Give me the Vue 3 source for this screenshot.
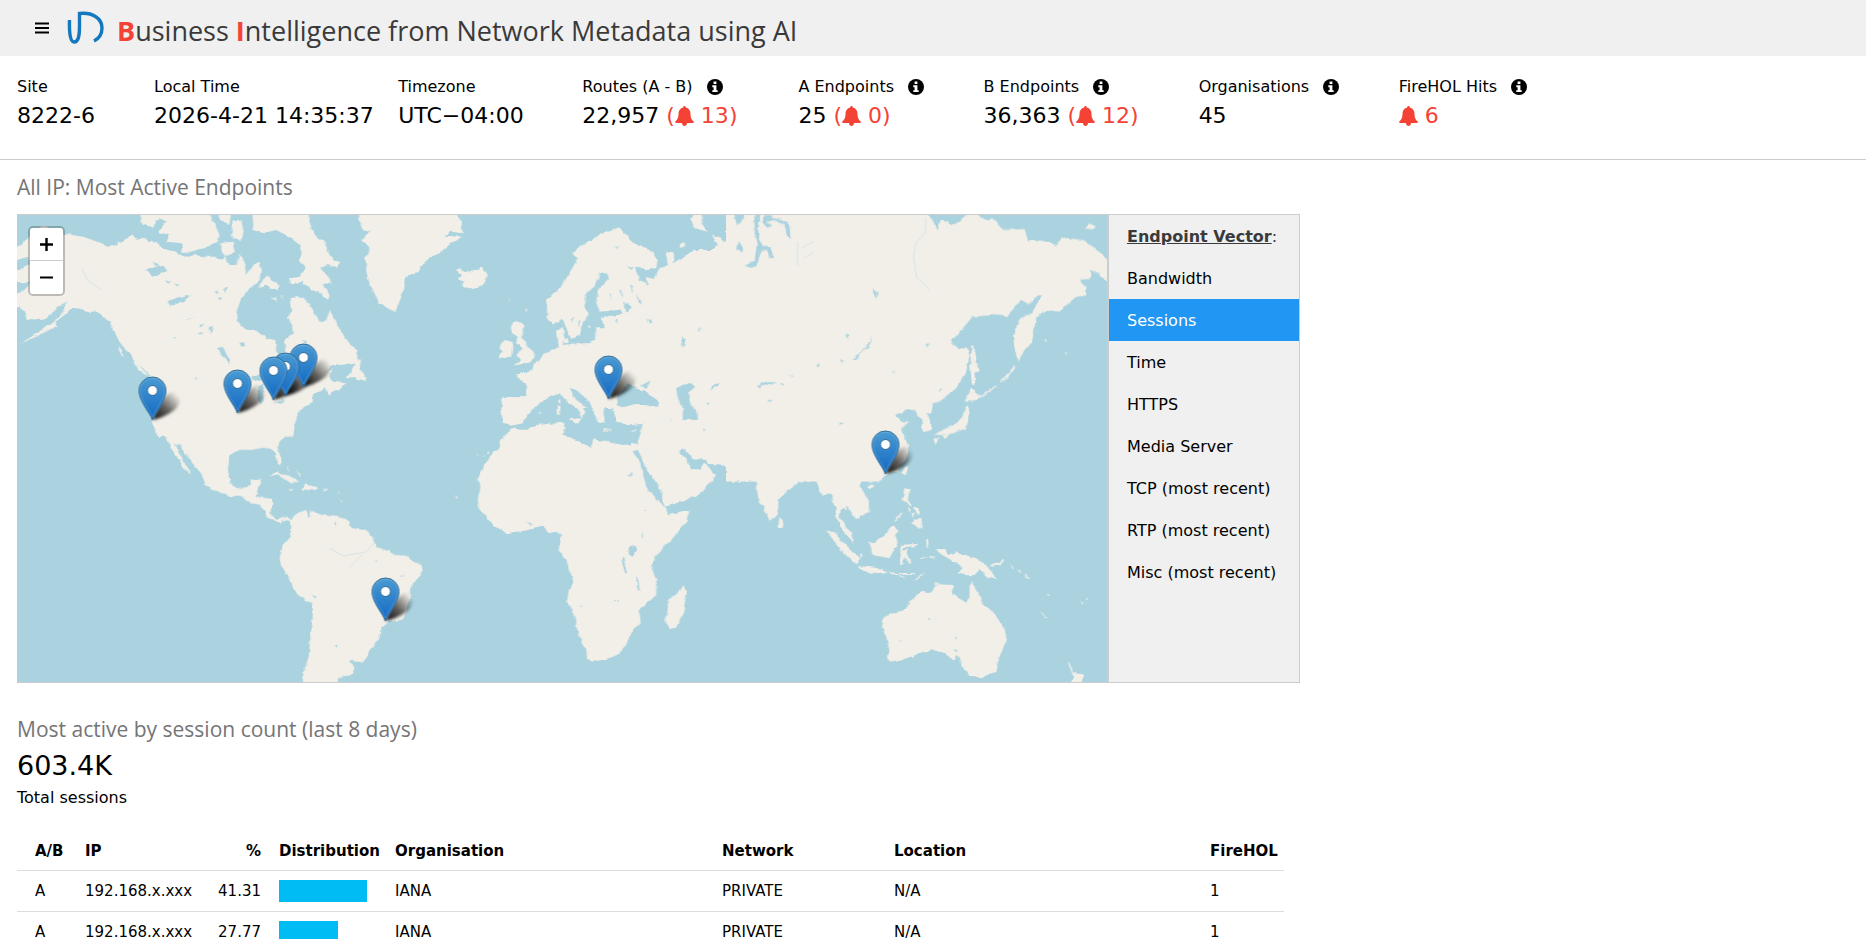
<script setup>
import { ref } from 'vue'

const stats = [
  { label: 'Site', value: '8222-6' },
  { label: 'Local Time', value: '2026-4-21 14:35:37' },
  { label: 'Timezone', value: 'UTC−04:00' },
  { label: 'Routes (A - B)', value: '22,957', info: true, alert: '13', wrap: true },
  { label: 'A Endpoints', value: '25', info: true, alert: '0', wrap: true },
  { label: 'B Endpoints', value: '36,363', info: true, alert: '12', wrap: true },
  { label: 'Organisations', value: '45', info: true },
  { label: 'FireHOL Hits', value: '', info: true, alert: '6' },
]

const vectors = ['Bandwidth', 'Sessions', 'Time', 'HTTPS', 'Media Server', 'TCP (most recent)', 'RTP (most recent)', 'Misc (most recent)']
const active = ref('Sessions')

const rows = [
  { side: 'A', ip: '192.168.x.xxx', pct: 41.31, org: 'IANA', network: 'PRIVATE', location: 'N/A', hits: 1 },
  { side: 'A', ip: '192.168.x.xxx', pct: 27.77, org: 'IANA', network: 'PRIVATE', location: 'N/A', hits: 1 },
]

// Marker tips in map units, northernmost first so that southern pins overlap them
const pins = [[304, 387], [286, 396], [609, 399], [274, 400], [238, 413], [153, 420], [886, 474], [386, 621]]
</script>

<template>
  <div class="page">
    <header class="topbar">
      <button class="menu" type="button" aria-label="Menu">
        <svg width="14" height="12" viewBox="0 0 14 12"><path d="M0 1.500h14M0 6h14M0 10.500h14" stroke="#000" stroke-width="2.200" /></svg>
      </button>
      <svg class="logo" width="38" height="34" viewBox="0 0 38 34" fill="none" stroke="#1478be" stroke-width="3.400">
        <path d="M2.500 9C2.200 18 2.500 31 7 31C12 31 12.500 23 12.500 15V2.500C25 1 35 7 35 17C35 23 32 27.500 27 30" />
      </svg>
      <h1><b>B</b>usiness <b>I</b>ntelligence from Network Metadata using AI</h1>
    </header>

    <section class="stats">
      <div v-for="s in stats" :key="s.label" class="stat">
        <div class="label">
          {{ s.label }}
          <svg v-if="s.info" class="info" width="16" height="16" viewBox="0 0 16 16">
            <circle cx="8" cy="8" r="8" />
            <path fill="#fff" d="M6.600 2.600h2.800v2.300H6.600zM5.300 6.300h4.100v4.900h1.300v1.900H5.300v-1.900h1.300V8.200H5.300z" />
          </svg>
        </div>
        <div class="value">
          {{ s.value }}
          <span v-if="s.alert" class="alert"><template v-if="s.wrap">(</template><svg width="19" height="20" viewBox="0 0 19 20"><path d="M9.500 0c.8 0 1.300.6 1.300 1.400C13.800 2 15.500 4.500 15.500 7.500c0 4.500 1.200 6.300 3 7.800.6.600.3 1.700-.7 1.700H12c0 1.600-1.100 2.900-2.500 2.900S7 18.600 7 17H1.200c-1 0-1.300-1.100-.7-1.700 1.800-1.500 3-3.300 3-7.800 0-3 1.700-5.500 4.700-6.100C8.200.6 8.700 0 9.500 0z" /></svg> {{ s.alert }}<template v-if="s.wrap">)</template></span>
        </div>
      </div>
    </section>

    <main>
      <h2>All IP: Most Active Endpoints</h2>
      <div class="explorer">
        <div class="map">
          <svg class="world" viewBox="17 215 1091 467" preserveAspectRatio="xMidYMid slice" role="img" aria-label="World map of active endpoints">
            <defs>
              <filter id="coast" x="0" y="0" width="1120" height="700" filterUnits="userSpaceOnUse">
                <feTurbulence type="fractalNoise" baseFrequency="0.16" numOctaves="2" seed="4" />
                <feDisplacementMap in="SourceGraphic" scale="4" xChannelSelector="R" yChannelSelector="G" />
              </filter>
              <filter id="soft" x="-30%" y="-30%" width="160%" height="160%"><feGaussianBlur stdDeviation="1.6" /></filter>
              <linearGradient id="pinFill" x1="0" y1="0" x2="0" y2="1">
                <stop offset="0" stop-color="#4a9bd3" /><stop offset="1" stop-color="#1268c3" />
              </linearGradient>
              <linearGradient id="shade" x1="0" y1="1" x2="1" y2="0">
                <stop offset="0" stop-opacity=".95" /><stop offset=".45" stop-opacity=".6" /><stop offset=".9" stop-opacity="0" />
              </linearGradient>
              <g id="pin">
                <path d="M0 0C-3-8-13.500-19-13.500-29.500a13.500 13.500 0 0 1 27 0C13.500-19 3-8 0 0z" fill="url(#pinFill)" stroke="#2e6c97" stroke-width="1" />
                <path d="M0-3C-3-11-12.300-20-12.300-29.500a12.300 12.300 0 0 1 24.600 0C12.300-20 3-11 0-3z" fill="none" stroke="#fff" stroke-opacity=".16" />
                <circle cy="-29.500" r="5" fill="#fff" stroke="#2e6c97" stroke-width="1" />
              </g>
            </defs>
            <rect x="0" y="200" width="1130" height="500" fill="#aad3df" />
            <g filter="url(#coast)" class="land">
              <g transform="translate(0 165) scale(.33333)">
                <path d="M30 262L51 248 80 225 110 195 135 182 160 200 200 207 250 215 290 228 330 248 360 232 400 208 410 225 435 218 450 232 475 232 490 250 520 260 560 275 590 270 620 275 650 275 665 285 680 275 690 300 710 300 720 265 738 300 735 330 760 300 780 290 785 310 780 345 750 370 725 400 712 440 716 470 735 490 765 495 800 518 828 526 830 560 845 580 858 562 855 530 880 505 878 480 865 460 875 440 870 400 910 395 930 420 945 440 960 470 980 465 992 435 1005 465 1025 500 1050 535 1075 555 1073 590 1040 598 1000 603 970 625 1000 612 990 630 1000 650 1040 655 1020 670 985 690 975 668 940 690 940 710 915 725 900 735 885 770 888 790 880 815H475L465 790 455 765 445 720 445 680 450 630 430 610 405 595 400 570 375 550 360 530 345 500 330 470 310 455 290 440 260 440 230 425 215 435 195 450 165 470 175 485 150 495 110 515 60 538 120 500 160 470 190 440 200 412 180 425 150 450 130 465 85 462 75 435 51 425 30 430z" />
                <path d="M420 140L430 180 460 185 480 160 500 170 475 200 510 210 500 230 550 235 545 260 575 260 620 245 655 230 660 210 645 175 625 140zM650 140L665 165 690 180 695 140zM700 165L725 165 735 210 720 225 695 215zM755 140L760 195 790 205 830 195 870 215 900 240 910 260 900 290 920 310 900 335 870 340 875 355 910 350 935 375 965 385 985 405 990 390 970 360 990 350 1000 365 985 330 960 310 985 300 1010 310 1022 295 990 270 975 230 950 215 935 190 925 140zM800 330L815 345 840 365 830 375 800 360 780 370 790 345zM660 235L700 230 705 260 680 275 665 260zM1066 590L1085 583 1080 610 1100 635 1100 648 1070 640 1042 640 1055 615zM818 400l12-2-2 10zM842 392l12 0-4 10zM355 545l12 12 5 20-10-10zM400 592l20 12 30 30-30-18z" />
                <path class="water" d="M30 292L85 275 92 300 51 318H30zM30 350L90 352 75 378 30 392zM655 550L670 545 690 585 690 600 665 570zM505 408L560 390 575 392 545 412 515 422zM435 312L492 302 500 315 465 335 455 325zM548 468L590 454 570 462zM755 638L790 622 805 640 770 650zM775 665L795 655 787 715 775 710zM810 655L840 660 835 680zM820 716L858 700 850 712zM460 290l15 8-10 8zM525 355l15 6-8 6zM645 380l12-4-3 12zM670 372l12-3-5 16zM655 400l8-3 2 12zM600 475l15 4-10 5zM630 490l14-8-8 24zM595 505l14-4-5 12zM495 350l20-6-10 12zM515 520l12-2-6 6zM585 640l10-4-4 8zM720 535l10-4 4 12-10 2zM905 530l14-6 3 12zM945 430l28 2-8 18z" />
              </g>
              <g transform="translate(370 205) scale(.33333)">
                <path d="M-32 15L-30 45-22 75 0 80-25 105 0 130-12 160-10 200 0 235 30 295 75 322 90 290 105 250 105 215 145 200 175 160 210 145 245 115 278 95 220 92 245 80 280 85 275 45 250 15z" />
                <path d="M260 195L270 188 285 205 300 200 335 188 355 210 345 235 310 255 275 240 285 230 262 222 280 212zM430 350L465 360 455 395 480 430 498 445 490 470 435 482 455 465 440 450 460 430 440 415 445 395 425 385zM405 405L430 410 425 455 388 460 400 440 390 430zM963 40L985 15 1000 30 1000 60 1015 80 975 70zM598 643L634 640 622 656zM562 605L573 602 571 630 562 628zM566 585l6-4 1 16-6 0zM700 672L732 676 702 677zM783 678L803 672 794 682zM932 118l12-6 4 10-12 8zM583 403l12-4 2 14-10 2zM652 365l8-6-3 14zM505 624l10-4-4 8zM470 308l4 8-6 4zM416 280l6 4-4 6z" />
                <path d="M400 575L470 577 473 545 440 508 480 500 500 470 530 440 565 430 560 380 580 365 585 400 580 420 620 415 660 415 680 405 680 370 710 370 690 340 720 333 762 328 750 315 690 320 680 290 685 255 718 220 715 205 690 205 680 240 650 265 645 305 660 330 640 350 635 390 605 402 590 370 580 340 555 357 535 345 530 285 575 245 600 205 625 160 605 145 655 110 700 85 750 70 770 90 800 120 840 135 865 165 860 190 835 195 795 182 812 225 835 240 830 215 852 222 870 190 895 180 888 140 915 145 910 175 935 160 975 135 1030 135 1045 120 1028 88 1060 105 1100 125 1122 140 1105 85 1120 50 1125 10 1200 10 1200 665 818 657 785 660 740 650 730 608 700 610 706 650 690 655 670 615 660 590 620 555 600 548 620 585 655 608 640 610 648 625 635 640 630 615 595 590 570 565 545 575 515 590 480 625 460 655 425 662 400 650 395 610z" />
                <path class="water" d="M740 600L745 570 775 535 800 545 800 555 830 560 870 590 865 605 800 597 760 607zM812 543L845 526 832 548zM920 550L960 530 977 545 955 565 965 600 985 625 985 655 940 655 940 610 925 580zM765 290L788 305 772 320 763 305zM803 265L822 300 808 290zM830 340l16 12-8 4zM735 342l8 0 0 14zM600 345l14-10-6 16zM625 350l8-4-4 18zM738 120l8 4-4 10zM752 255l6 0 0 28zM720 268l5 0-3 18zM785 240l6 4-4 22zM935 395l16 6-12 28zM985 375l10-6-8 12zM1028 540l24-6-28 26zM1120 182l20-2-4 10zM775 180l14 8-8 8z" />
              </g>
              <g transform="translate(740 205) scale(.33333)">
                <path d="M-40 10L555 10 575 40 595 75 605 45 640 60 675 35 700 15 735 45 760 40 790 75 855 72 865 105 930 108 950 125 965 98 1035 105 1090 150 1102 165 1120 200 1120 230 1102 228 1080 208 1055 195 1055 220 1020 225 1040 245 1040 272 1010 275 960 320 920 315 890 335 885 370 880 410 860 430 835 468 825 430 820 390 845 340 880 320 905 272 890 275 865 300 850 287 825 300 805 335 760 330 700 335 635 410 660 430 685 430 690 455 680 500 650 550 610 582 580 600 575 625 560 625 575 650 575 675 550 682 545 640 530 620 510 610 468 632 490 650 510 650 485 670 505 720 505 745 480 790 437 808 420 830H-40z" />
                <path d="M698 420L705 425 717 500 705 505 708 540 697 535 692 480zM692 548L725 575 695 590 678 590zM685 600L692 625 680 670 640 685 600 690 585 688 650 655 670 635 675 610zM582 700L597 700 590 718 585 715zM607 692L632 686 620 698zM1035 70L1050 55 1070 65 1060 73zM496 788L505 785 500 806 492 808zM720 573L770 542 771 546 722 577zM780 535l20-22 24-32 4 3-22 32-24 22zM915 403l8 4-5 4zM980 440l5 6-5 2z" />
                <path class="water" d="M-20 10L14 10 8 50-8 60zM-5 105L12 130 8 142-10 135zM44 10L64 10 58 60 56 100 70 122 92 125 104 160 90 158 82 132 66 135 50 185 10 185 45 168 52 120 46 90zM75 30l28 0-4 10 22 0 28 18 5 44-12-10-5-30-30-18-28 8 20 10-16 6-15-16zM396 397L388 425 345 464 340 460 378 430zM56 540L68 531 110 532 110 537 65 540 62 552zM82 585l18 0-8 8zM230 478l12 2-8 8zM305 462l8 4-6 10zM147 510l16 6-8 2zM120 534l16 6-6 4zM556 418l16-4-10 12zM600 550l8 2-4 8zM462 500l5-4-3 10zM318 388l10 6-6 6zM300 652l12 6-8 4zM396 250l22 16-10 12z" />
              </g>
              <g transform="translate(100 420) scale(.33333)">
                <path d="M155 -10L160 10 175 35 200 50 210 75 225 100 240 120 255 148 272 160 262 138 247 115 237 90 223 70 240 73 252 95 275 125 305 160 315 185 315 195 345 210 395 230 425 230 450 248 480 255 497 275 500 290 545 310 550 300 568 302 575 318 590 290 575 297 550 291 530 298 512 280 518 270 518 237 468 230 475 205 485 178 455 180 445 200 415 208 395 190 385 160 390 105 420 90 455 90 490 83 515 87 525 100 540 137 547 125 535 85 540 65 560 45 588 10 585-10z" />
                <path d="M575 305L590 280 625 268 645 280 685 285 715 288 740 300 760 325 800 330 820 350 830 380 870 395 885 405 925 408 945 428 965 430 970 455 950 480 932 505 930 550 915 590 905 600 870 605 843 625 840 655 820 680 800 715 790 727 750 722 765 745 755 765 715 775 715 800 610 800 612 755 628 710 632 660 640 590 640 555 595 525 580 500 560 460 545 435 540 415 550 375 575 345z" />
                <path d="M506 168L530 157 570 168 602 188 575 190 540 166zM600 207L620 193 657 203 640 211zM668 206h14v4h-14zM566 206l18 2-10 5zM564 138l6 10-4 2zM585 150l20 14-4 2zM716 216l4 6-4 4zM722 238l4 8-4 4zM1066 225l10 8-6 2z" />
                <path class="water" d="M622 268l8 0 4 22-8 6zM704 310l6-4 0 10zM640 525l12 6-6 4zM704 678l12-2-6 10zM896 472l20-5-8 6zM828 418l8 6-4 2z" />
              </g>
              <g transform="translate(460 400) scale(.33333)">
                <path d="M155 85L190 90 230 75 310 68 318 85 310 105 350 120 395 143 402 118 440 125 490 135 535 130 520 150 545 200 560 260 590 300 620 325 625 342 690 330 680 365 640 415 585 470 575 500 590 540 590 585 540 630 543 670 518 690 500 735 465 770 400 785 383 775 380 745 355 700 345 650 323 605 328 570 342 545 325 490 297 450 305 405 290 395 268 400 250 380 190 393 140 400 95 370 60 325 55 300 63 260 55 235 90 170 120 145 125 120z" />
                <path d="M550 60L548 80 535 130 520 146 530 160 538 155 565 210 605 270 615 320 670 305 725 280 770 228 735 190 720 208 693 208 685 185 660 152 675 146 700 175 740 180 745 192 830 195 870 240 888 235 895 290 932 365 955 340 958 295 1020 245 1065 228 1090 290 1115 280 1125 320 1160 330 1160 60zM960 350L973 370 970 383 957 380zM672 555L682 580 670 640 650 683 630 687 617 660 625 630 625 600 655 580zM46 162l12 4-8 3zM70 165l6 2-4 4zM84 155l6 2-6 8z" />
                <path class="water" d="M508 442L530 437 533 450 520 467 508 465zM485 475l6 0 12 42-6 4zM530 530l6 2 4 40-6-4zM545 398l6 14-4 2zM505 228l14-12-6 14zM205 362l10 8-2 10zM466 606l16-8-8 8zM360 618l12-2-8 5zM555 326l8 2-6 3zM730 88l8 2-6 4zM740 8l10 0-6 8zM632 56l6 8-4 2zM520 150l12 0 4 10-6 4z" />
              </g>
              <g transform="translate(780 420) scale(.33333)">
                <path d="M-20 240L0 232 60 180 105 167 130 230 155 218 168 260 170 295 190 330 221 370 215 338 180 295 185 255 205 260 230 298 268 275 268 240 238 195 260 175 285 178 318 168 355 150 385 110 385 80 370 50 300-30-20-30z" />
                <path d="M263 200L276 190 287 196 272 208zM385 138L376 142 370 158 378 168zM374 205L390 208 385 240 398 258 390 258 370 240zM395 308L425 292 429 320 415 327zM400 262l16 2 4 18-10-4zM385 262l8 6-2 12zM395 285l10-5-2 16zM342 304L366 277 369 280 345 307zM268 365L285 370 320 340 343 318 358 335 350 345 354 370 330 415 280 405zM138 328L165 340 210 385 238 410 236 436 205 412 165 365zM236 438L290 443 325 460 275 458 240 448zM330 457l25 2 50 0 0 6-70-2zM358 468l18 6-14 0zM400 480L432 459 430 464 403 482zM365 374l50-2 2-6-3 12-42 4-2 10 16-4-8 14 18 26-8 4-14-22-4 26-8-4 2-30zM440 358l6-2 2 30-6-6zM425 410l20 2-18 2zM448 408l22 2-18 4zM470 387L495 388 505 405 530 396 590 415 620 435 655 480 625 472 600 450 585 465 560 466 535 456 550 445 525 425 500 412 478 398zM633 435L660 430 670 416 674 420 664 436 640 440zM690 430l14 12-4 2zM710 446l20 12-6 0zM735 462l16 10-8 4zM462 487l22 2-18 4zM779 572L806 592 800 594zM902 546l12 2-6 6zM918 537l8-2-4 6zM803 520l8 10-6 0zM240 400l14 8-10 4z" />
                <path d="M313 590L380 567 395 540 430 513 455 518 470 493 522 495 515 520 560 548 570 530 570 495 580 482 590 515 602 525 615 560 640 575 675 625 682 660 660 710 648 755 610 772 570 767 550 740 538 708 520 724 500 700 460 690 410 705 345 727 323 718 330 695 320 650 308 625zM862 722L872 735 885 760 912 763 905 790 870 792 882 770z" />
                <path class="water" d="M526 650l6 2-2 8zM522 688l12 2-4 8zM446 594l8 2-6 2zM360 664l8-2-4 6zM528 706l8 2 0 16-6-4zM178 8l12 2-6 4z" />
              </g>
            </g>
            <g fill="none" stroke="#aad3df" stroke-width=".8" opacity=".5">
              <path d="M926 218L926 232 917 242 914 255 917 277 930 290M798 242v24M802 248l12-6M804 258l10-5M330 548l14 8 22-4 10-10M350 568l12-13M82 268l6 12 14 10" />
            </g>
            <g filter="url(#soft)">
              <path v-for="p in pins" :key="'s' + p" :transform="`translate(${p[0]} ${p[1]})`" d="M0 0C3-10 10-25 20-28C29-29 30-18 22-10C14-4 5-1 0 0z" fill="url(#shade)" />
            </g>
            <use v-for="p in pins" :key="'p' + p" href="#pin" :x="p[0]" :y="p[1]" />
          </svg>
          <div class="zoom">
            <button type="button" aria-label="Zoom in"><svg width="13" height="13" viewBox="0 0 13 13"><path d="M0 6.500h13M6.500 0v13" stroke="#000" stroke-width="2.400" /></svg></button>
            <button type="button" aria-label="Zoom out"><svg width="13" height="13" viewBox="0 0 13 13"><path d="M0 6.500h13" stroke="#000" stroke-width="2" /></svg></button>
          </div>
        </div>
        <nav class="vectors">
          <div class="heading"><b>Endpoint Vector</b>:</div>
          <button v-for="v in vectors" :key="v" type="button" :class="{ active: v === active }" @click="active = v">{{ v }}</button>
        </nav>
      </div>

      <h2 class="summary">Most active by session count (last 8 days)</h2>
      <div class="total">603.4K</div>
      <div class="caption">Total sessions</div>

      <table>
        <thead>
          <tr>
            <th class="side">A/B</th><th class="ip">IP</th><th class="pct">%</th><th class="dist">Distribution</th>
            <th class="org">Organisation</th><th class="net">Network</th><th class="loc">Location</th><th class="hits">FireHOL</th>
          </tr>
        </thead>
        <tbody>
          <tr v-for="(r, i) in rows" :key="i">
            <td>{{ r.side }}</td><td>{{ r.ip }}</td><td class="pct">{{ r.pct }}</td>
            <td><div class="bar" :style="{ width: Math.round(r.pct * 2.12) + 'px' }"></div></td>
            <td>{{ r.org }}</td><td>{{ r.network }}</td><td>{{ r.location }}</td><td>{{ r.hits }}</td>
          </tr>
        </tbody>
      </table>
    </main>
  </div>
</template>

<style>
body { margin: 0; background: #fff; }
</style>

<style scoped>
.page { font: 16px/24px "DejaVu Sans", Verdana, sans-serif; color: #000; }
button { font: inherit; color: inherit; border: 0; margin: 0; padding: 0; background: none; cursor: pointer; }
.topbar { display: flex; align-items: center; height: 56px; padding-left: 35px; background: #f0f0f0; }
.menu { display: flex; }
.logo { margin: 0 12px 0 18px; }
h1 { margin: 0; font: 400 27px/40px "Open Sans", "Noto Sans", sans-serif; color: #3a3a3a; padding-top: 5px; white-space: nowrap; }
h1 b { color: #f44336; }
.stats { display: grid; grid-template-columns: 137fr 244fr 184fr 216fr 185fr 215fr 200fr 467fr; padding: 19px 0 27px 17px; border-bottom: 1px solid #ccc; white-space: nowrap; }
.label { display: flex; align-items: center; gap: 14px; }
.value { font-size: 22px; line-height: 33px; }
.alert { color: #f44336; }
.alert svg { fill: #f44336; vertical-align: -3px; }
main { max-width: 1283px; padding: 11px 17px 0; }
h2 { margin: 0 0 10px; font: 400 21px/33px "Open Sans", "Noto Sans", sans-serif; color: #757575; }
.explorer { display: flex; border: solid #ccc; border-width: 1px 1px 1px 0; background: #f0f0f0; }
.map { position: relative; flex: 1; min-width: 0; min-height: 467px; background: #aad3df; }
.world { display: block; width: 100%; height: 100%; position: absolute; inset: 0; }
.land path { fill: #f2efe9; }
.land .water { fill: #aad3df; }
.zoom { position: absolute; left: 11px; top: 11px; border: 2px solid rgba(0, 0, 0, .22); border-radius: 5px; background-clip: padding-box; }
.zoom button { display: flex; align-items: center; justify-content: center; width: 33px; height: 33px; background: #fff; border-radius: 0 0 3px 3px; }
.zoom button:first-child { height: 32px; box-sizing: content-box; border-bottom: 1px solid #ccc; border-radius: 3px 3px 0 0; }
.vectors { display: flex; flex-direction: column; flex: 0 0 190px; border-left: 2px solid #ccc; }
.heading, .vectors button { padding: 10px 18px 8px; text-align: left; white-space: nowrap; }
.heading { color: #3a3a3a; }
.heading b { text-decoration: underline; }
.vectors .active { background: #2196f3; color: #fff; }
.summary { margin: 30px 0 0; }
.total { font-size: 27px; line-height: 40px; }
table { width: calc(100% - 16px); margin-top: 22px; border-collapse: collapse; table-layout: fixed; font-size: 15px; line-height: 22px; }
th, td { padding: 9px; text-align: left; white-space: nowrap; }
th { padding: 8px 9px; }
tr { border-bottom: 1px solid #ddd; }
th:first-child, td:first-child { padding-left: 18px; }
th.pct, td.pct { text-align: right; }
th { box-sizing: border-box; }
.side { width: 59px; }
.ip { width: 124px; }
th.pct { width: 70px; }
.dist { width: 116px; }
.org { width: 327px; }
.net { width: 172px; }
.loc { width: 316px; }
.bar { height: 22px; background: #00bcf5; }
</style>
